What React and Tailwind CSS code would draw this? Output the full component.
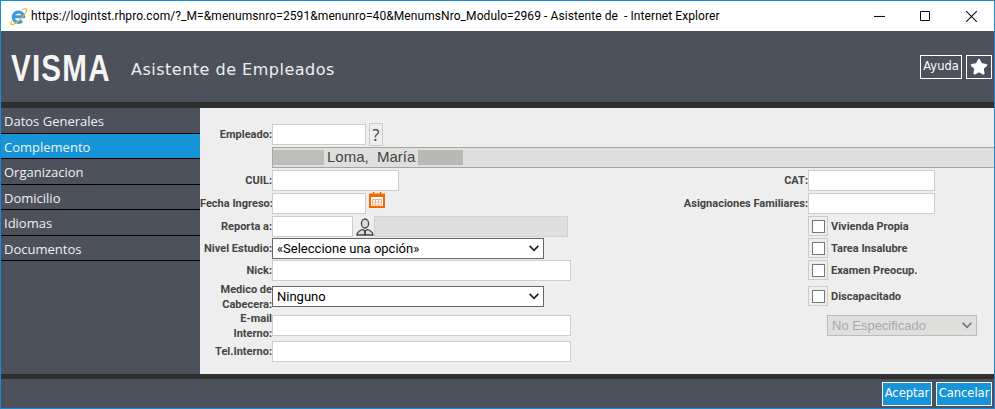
import { Star } from "lucide-react";

const menu = ["Datos Generales", "Complemento", "Organizacion", "Domicilio", "Idiomas", "Documentos"];
const labelFont = { fontFamily: 'Roboto, sans-serif' };

function IeIcon() {
  return (
    <svg viewBox="0 0 20 20" className="w-[19px] h-[19px] shrink-0">
      <path d="M4.800 10.200h10.600A5.500 5.500 0 1 0 13.800 14.600" fill="none" stroke="#3a9be0" strokeWidth="3.200" />
      <path d="M3 14.500C.5 18.500 2.500 19.500 6 17.500 11 14.500 16 9 18.500 4.500c1.200-2.800-1-3.500-5-1.500" fill="none" stroke="#f0b429" strokeWidth="1.300" />
    </svg>
  );
}

function Chevron({ muted }) {
  return (
    <svg viewBox="0 0 12 8" className="absolute right-[4px] top-[7px] w-[12px] h-[7px] pointer-events-none">
      <path d="M1 1l5 5 5-5" fill="none" stroke={muted ? "#777" : "#222"} strokeWidth="2" />
    </svg>
  );
}

function Label({ children, width }) {
  return (
    <label style={labelFont} className={`text-[11px] leading-[15px] font-bold text-[#444] text-right ${width}`}>
      {children}
    </label>
  );
}

function Field({ className = "" }) {
  return <input type="text" className={`h-[21px] border border-[#ccc] bg-white outline-none ${className}`} />;
}

function Choice({ value, className = "" }) {
  return (
    <div className={`relative h-[21px] ${className}`}>
      <select className="block appearance-none w-full h-full border border-[#666] bg-white pl-[4px] text-[13px] text-black outline-none rounded-none font-['Roboto',sans-serif]" defaultValue={value}>
        <option>{value}</option>
      </select>
      <Chevron />
    </div>
  );
}

function Check({ text, className = "" }) {
  return (
    <div className={`flex items-center h-[20px] ${className}`}>
      <span className="w-[20px] h-[20px] border border-[#ccc] grid place-items-center">
        <input type="checkbox" className="appearance-none w-[13px] h-[13px] border border-[#777] bg-white block" />
      </span>
      <span style={labelFont} className="ml-[3px] pt-[3px] text-[11px] font-bold text-[#444]">{text}</span>
    </div>
  );
}

export default function App() {
  return (
    <div className="w-[995px] h-[409px] border border-[#1a8ad4] flex flex-col overflow-hidden bg-[#4d515c]">
      <div className="h-[30px] bg-white flex items-center pl-[8px] shrink-0">
        <IeIcon />
        <span className="ml-[3px] text-[12px] tracking-[0.080px] text-black whitespace-pre font-['Roboto',sans-serif]">
          https://logintst.rhpro.com/?_M=&menumsnro=2591&menunro=40&MenumsNro_Modulo=2969 - Asistente de  - Internet Explorer
        </span>
        <div className="ml-auto flex items-center">
          <svg viewBox="0 0 10 10" className="w-[11px] h-[11px] mr-[35px]"><path d="M0 5h10" stroke="#111" strokeWidth="1" /></svg>
          <svg viewBox="0 0 10 10" className="w-[10px] h-[10px] mr-[36px]"><path d="M.5.500h9v9h-9z" fill="none" stroke="#111" strokeWidth="1" /></svg>
          <svg viewBox="0 0 10 10" className="w-[11px] h-[11px] mr-[17px]"><path d="M0 0l10 10M10 0L0 10" stroke="#111" strokeWidth="1" /></svg>
        </div>
      </div>

      <header className="h-[71px] shrink-0 flex items-center pl-[10px] pr-[2px]">
        <div className="w-[120px] mt-[4px]">
          <div className="origin-left scale-x-[0.8] text-[37px] tracking-[1.500px] leading-none font-bold text-[#f4f4f4] font-['Liberation_Sans',sans-serif]">VISMA</div>
        </div>
        <h1 className="text-[16px] mt-[6px] text-[#eee] font-['DejaVu_Sans',sans-serif] tracking-[0.500px]">Asistente de Empleados</h1>
        <div className="ml-auto flex gap-[4px]">
          <button className="w-[42px] h-[24px] border border-white text-[11.500px] text-white font-['DejaVu_Sans',sans-serif]">Ayuda</button>
          <button className="w-[26px] h-[24px] border border-white grid place-items-center">
            <Star size={18} fill="white" stroke="white" />
          </button>
        </div>
      </header>

      <div className="h-[6px] shrink-0 bg-[#2f2f2f]" />

      <main className="h-[266px] shrink-0 flex">
        <nav className="w-[199px] shrink-0">
          {menu.map((m) => (
            <div key={m} className={`h-[25.5px] border-b border-black pl-[3px] pt-[3px] flex items-center text-[13px] text-[#f0f0f0] font-['Open_Sans',sans-serif] ${m === "Complemento" ? "bg-[#1793d7]" : ""}`}>
              {m}
            </div>
          ))}
        </nav>

        <section className="flex-1 bg-[#eee] pt-[16px]">
          <div className="flex items-center h-[21px]">
            <Label width="w-[72px]">Empleado:</Label>
            <Field className="w-[94px]" />
            <button className="ml-[3px] w-[14px] h-[23px] border border-[#ccc] text-[16px] leading-none text-[#444]">?</button>
          </div>

          <div className="ml-[72px] mt-[2px] h-[21px] border border-r-0 border-[#a5a5a2] bg-[#dfdfdd] flex items-center text-[15px] text-[#444] font-['Liberation_Sans',sans-serif] whitespace-pre">
            <span className="w-[51px] h-[15px] bg-[#bdbdba]" />
            <span className="ml-[3px] w-[91px]">Loma,  María</span>
            <span className="w-[45px] h-[15px] bg-[#b8b8b5]" />
          </div>

          <div className="flex mt-[2px]">
            <div className="w-[400px] shrink-0 flex flex-col">
              <div className="flex items-center h-[21px]">
                <Label width="w-[72px]">CUIL:</Label>
                <Field className="w-[127px]" />
              </div>
              <div className="flex items-center h-[21px] mt-[2px]">
                <Label width="w-[72px] whitespace-nowrap">Fecha Ingreso:</Label>
                <Field className="w-[94px]" />
                <svg viewBox="0 0 16 16" className="ml-[3px] w-[16px] h-[16px] -mt-[7px]">
                  <path d="M1 2.500h14v12.500H1z" fill="#fff" stroke="#f56a00" strokeWidth="2" />
                  <path d="M1 2h14v3H1z" fill="#f56a00" />
                  <path d="M4.500 0v2M11.500 0v2" stroke="#f56a00" strokeWidth="1.500" />
                  <path d="M3.500 7.500h9v5.500h-9zM3.500 10.200h9M6.500 7.500v5.500M9.500 7.500v5.500" fill="none" stroke="#fab088" strokeWidth="1" />
                </svg>
              </div>
              <div className="flex items-center h-[21px] mt-[2px]">
                <Label width="w-[72px]">Reporta a:</Label>
                <Field className="w-[81px]" />
                <svg viewBox="0 0 18 18" className="ml-[3px] w-[18px] h-[18px]">
                  <ellipse cx="9" cy="5.500" rx="3.600" ry="4.500" fill="#ddd" stroke="#444" strokeWidth="1.300" />
                  <path d="M1 17c.3-3.500 2.500-4.500 5.500-5.500L9 13l2.500-1.500c3 1 5.200 2 5.500 5.500z" fill="#ddd" stroke="#444" strokeWidth="1.300" />
                  <path d="M9 13v4" stroke="#222" strokeWidth="1.500" />
                </svg>
                <div className="w-[194px] h-[21px] bg-[#dfdfdd] border border-[#d2d2d0]" />
              </div>
              <div className="flex items-center h-[21px] mt-[1px]">
                <Label width="w-[72px] whitespace-nowrap">Nivel Estudio:</Label>
                <Choice value="«Seleccione una opción»" className="w-[272px]" />
              </div>
              <div className="flex items-center h-[21px] mt-[1px]">
                <Label width="w-[72px]">Nick:</Label>
                <Field className="w-[299px]" />
              </div>
              <div className="flex items-center h-[21px] mt-[5px]">
                <Label width="w-[72px]">Medico de Cabecera:</Label>
                <Choice value="Ninguno" className="w-[272px]" />
              </div>
              <div className="flex items-center h-[21px] mt-[8px]">
                <Label width="w-[72px]">E-mail Interno:</Label>
                <Field className="w-[299px]" />
              </div>
              <div className="flex items-center h-[21px] mt-[5px]">
                <Label width="w-[72px]">Tel.Interno:</Label>
                <Field className="w-[299px]" />
              </div>
            </div>

            <div className="flex-1 flex flex-col">
              <div className="flex items-center h-[21px]">
                <Label width="w-[208px]">CAT:</Label>
                <Field className="w-[127px]" />
              </div>
              <div className="flex items-center h-[21px] mt-[2px]">
                <Label width="w-[208px]">Asignaciones Familiares:</Label>
                <Field className="w-[127px]" />
              </div>
              <div className="ml-[208px] mt-[2px] flex flex-col">
                <Check text="Vivienda Propia" />
                <Check text="Tarea Insalubre" className="mt-[2px]" />
                <Check text="Examen Preocup." className="mt-[2px]" />
                <Check text="Discapacitado" className="mt-[6px]" />
                <div className="relative ml-[19px] mt-[9px] w-[150px] h-[21px]">
                  <select disabled defaultValue="No Especificado" className="block appearance-none w-full h-full border border-[#bbb] bg-[#dfdfdd] pl-[4px] text-[13px] text-[#a8a8a8] outline-none rounded-none font-['Liberation_Sans',sans-serif]">
                    <option>No Especificado</option>
                  </select>
                  <Chevron muted />
                </div>
              </div>
            </div>
          </div>
        </section>
      </main>

      <div className="h-[5px] shrink-0 bg-[#2f2f2f]" />

      <footer className="flex-1 flex justify-end items-center gap-[4px] pr-[2px]">
        <button className="w-[50px] h-[24px] border border-white bg-[#1793d7] text-[11.500px] text-white font-['DejaVu_Sans',sans-serif]">Aceptar</button>
        <button className="w-[56px] h-[24px] border border-white bg-[#1793d7] text-[11.500px] text-white font-['DejaVu_Sans',sans-serif]">Cancelar</button>
      </footer>
    </div>
  );
}
